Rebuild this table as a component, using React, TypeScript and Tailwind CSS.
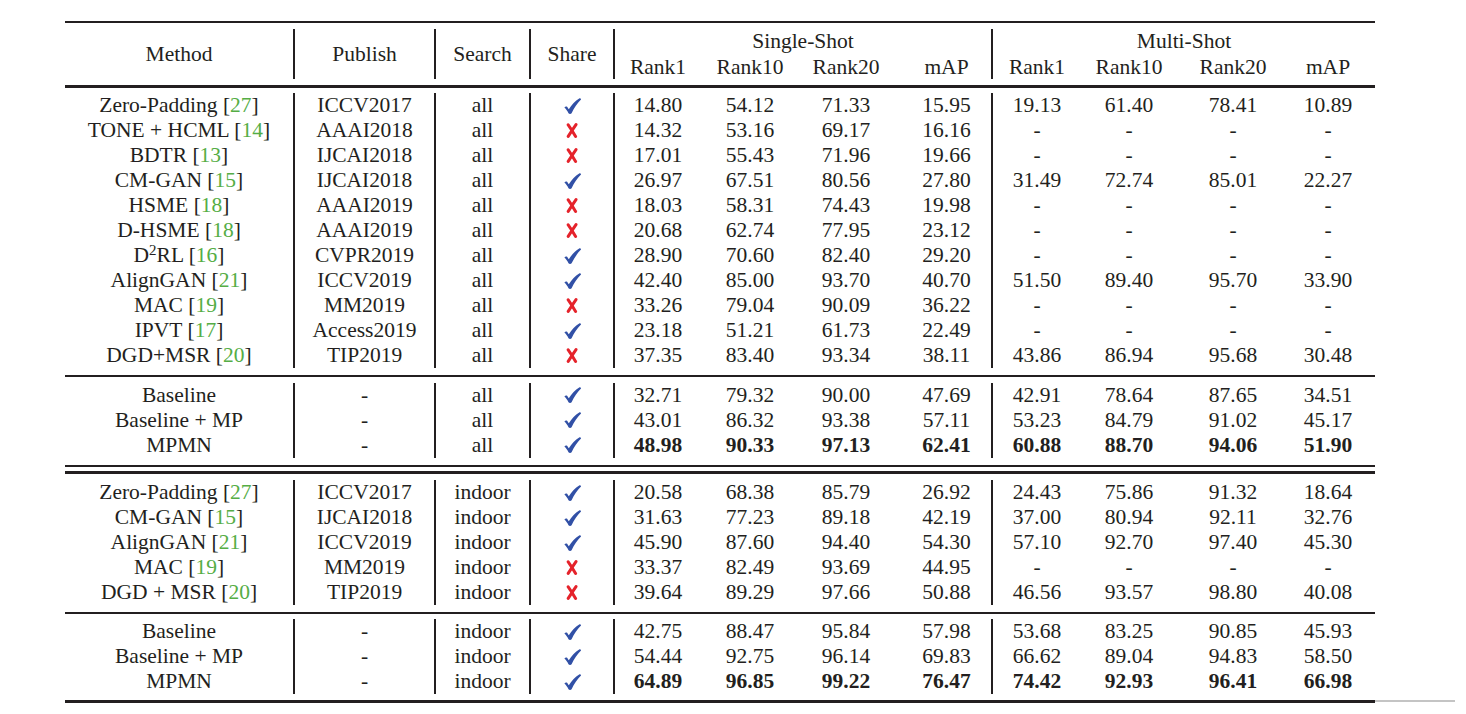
import React from "react";

const INK = "text-[#231f20]";

function Check() {
  return (
    <svg viewBox="0 0 17 16" className="inline-block w-[17px] h-[16px] align-middle" aria-hidden>
      <path
        d="M0.4 9.6 C1.4 8.2 3.1 8.2 3.9 9.9 L4.8 11.2 C7.8 6.6 11.2 2.8 15.2 0.4 C16.2 -0.1 17.4 0.8 17 1.6 C13.2 5.4 10.2 10 7.6 15.2 C7 16.2 5.2 16.3 4.5 15.2 C3.4 13.2 2.2 11.3 0.4 9.6 Z"
        fill="#3150a6"
      />
    </svg>
  );
}

function Cross() {
  return (
    <svg viewBox="0 0 12 15" className="inline-block w-[12px] h-[15px] align-middle" aria-hidden>
      <path d="M2.2 1.8 C4.5 5 7 9 9.6 13.4" stroke="#e5232b" strokeWidth="3" strokeLinecap="round" fill="none" />
      <path d="M10 1.6 C7.5 5.2 5 9 2.2 13.4" stroke="#e5232b" strokeWidth="3" strokeLinecap="round" fill="none" />
    </svg>
  );
}

function Cite({ n }: { n: string }) {
  return (
    <>
      {" "}[<span className="text-[#55ad45]">{n}</span>]
    </>
  );
}

type Row = {
  m: React.ReactNode;
  p: string;
  s: string;
  ok: boolean;
  v: string[];
  bold?: boolean;
};

const DASH = ["-", "-", "-", "-"];

const secA: Row[] = [
  { m: <>Zero-Padding<Cite n="27" /></>, p: "ICCV2017", s: "all", ok: true, v: ["14.80", "54.12", "71.33", "15.95", "19.13", "61.40", "78.41", "10.89"] },
  { m: <>TONE + HCML<Cite n="14" /></>, p: "AAAI2018", s: "all", ok: false, v: ["14.32", "53.16", "69.17", "16.16", ...DASH] },
  { m: <>BDTR<Cite n="13" /></>, p: "IJCAI2018", s: "all", ok: false, v: ["17.01", "55.43", "71.96", "19.66", ...DASH] },
  { m: <>CM-GAN<Cite n="15" /></>, p: "IJCAI2018", s: "all", ok: true, v: ["26.97", "67.51", "80.56", "27.80", "31.49", "72.74", "85.01", "22.27"] },
  { m: <>HSME<Cite n="18" /></>, p: "AAAI2019", s: "all", ok: false, v: ["18.03", "58.31", "74.43", "19.98", ...DASH] },
  { m: <>D-HSME<Cite n="18" /></>, p: "AAAI2019", s: "all", ok: false, v: ["20.68", "62.74", "77.95", "23.12", ...DASH] },
  { m: <>D<sup className="text-[15px]">2</sup>RL<Cite n="16" /></>, p: "CVPR2019", s: "all", ok: true, v: ["28.90", "70.60", "82.40", "29.20", ...DASH] },
  { m: <>AlignGAN<Cite n="21" /></>, p: "ICCV2019", s: "all", ok: true, v: ["42.40", "85.00", "93.70", "40.70", "51.50", "89.40", "95.70", "33.90"] },
  { m: <>MAC<Cite n="19" /></>, p: "MM2019", s: "all", ok: false, v: ["33.26", "79.04", "90.09", "36.22", ...DASH] },
  { m: <>IPVT<Cite n="17" /></>, p: "Access2019", s: "all", ok: true, v: ["23.18", "51.21", "61.73", "22.49", ...DASH] },
  { m: <>DGD+MSR<Cite n="20" /></>, p: "TIP2019", s: "all", ok: false, v: ["37.35", "83.40", "93.34", "38.11", "43.86", "86.94", "95.68", "30.48"] },
];

const secB: Row[] = [
  { m: "Baseline", p: "-", s: "all", ok: true, v: ["32.71", "79.32", "90.00", "47.69", "42.91", "78.64", "87.65", "34.51"] },
  { m: "Baseline + MP", p: "-", s: "all", ok: true, v: ["43.01", "86.32", "93.38", "57.11", "53.23", "84.79", "91.02", "45.17"] },
  { m: "MPMN", p: "-", s: "all", ok: true, bold: true, v: ["48.98", "90.33", "97.13", "62.41", "60.88", "88.70", "94.06", "51.90"] },
];

const secC: Row[] = [
  { m: <>Zero-Padding<Cite n="27" /></>, p: "ICCV2017", s: "indoor", ok: true, v: ["20.58", "68.38", "85.79", "26.92", "24.43", "75.86", "91.32", "18.64"] },
  { m: <>CM-GAN<Cite n="15" /></>, p: "IJCAI2018", s: "indoor", ok: true, v: ["31.63", "77.23", "89.18", "42.19", "37.00", "80.94", "92.11", "32.76"] },
  { m: <>AlignGAN<Cite n="21" /></>, p: "ICCV2019", s: "indoor", ok: true, v: ["45.90", "87.60", "94.40", "54.30", "57.10", "92.70", "97.40", "45.30"] },
  { m: <>MAC<Cite n="19" /></>, p: "MM2019", s: "indoor", ok: false, v: ["33.37", "82.49", "93.69", "44.95", ...DASH] },
  { m: <>DGD + MSR<Cite n="20" /></>, p: "TIP2019", s: "indoor", ok: false, v: ["39.64", "89.29", "97.66", "50.88", "46.56", "93.57", "98.80", "40.08"] },
];

const secD: Row[] = [
  { m: "Baseline", p: "-", s: "indoor", ok: true, v: ["42.75", "88.47", "95.84", "57.98", "53.68", "83.25", "90.85", "45.93"] },
  { m: "Baseline + MP", p: "-", s: "indoor", ok: true, v: ["54.44", "92.75", "96.14", "69.83", "66.62", "89.04", "94.83", "58.50"] },
  { m: "MPMN", p: "-", s: "indoor", ok: true, bold: true, v: ["64.89", "96.85", "99.22", "76.47", "74.42", "92.93", "96.41", "66.98"] },
];

const GRID =
  "grid grid-cols-[228px_141px_95px_84px_88px_98px_94px_98px_90px_96px_112px_86px]";

const BAR = "border-l-2 border-[#231f20]";

const valClass = [BAR, "", "", "pl-[9px]", BAR, "", "", "pr-[8px]"];

function Section({ rows, className }: { rows: Row[]; className: string }) {
  return (
    <div className={`${GRID} leading-[25px] ${className}`}>
      {rows.map((r, i) => (
        <React.Fragment key={i}>
          <div className="text-center whitespace-nowrap">{r.m}</div>
          <div className={`text-center ${BAR}`}>{r.p}</div>
          <div className={`text-center ${BAR}`}>{r.s}</div>
          <div className={`flex items-center justify-center ${BAR}`}>{r.ok ? <Check /> : <Cross />}</div>
          {r.v.map((x, j) => (
            <div key={j} className={`text-center ${valClass[j]} ${r.bold ? "font-bold" : ""}`}>
              {x}
            </div>
          ))}
        </React.Fragment>
      ))}
    </div>
  );
}

function Rule({ h }: { h: string }) {
  return <div className={`w-[1310px] bg-[#231f20] ${h}`} />;
}

export default function App() {
  return (
    <div
      className={`w-[1466px] h-[714px] bg-white pl-[65px] pt-[21px] text-[21.5px] ${INK} overflow-hidden`}
      style={{ fontFamily: '"Liberation Serif", "Times New Roman", serif' }}
    >
      <Rule h="h-[2px]" />
      <div className="pt-[8px] pb-[6px]">
        <div className={`${GRID} grid-rows-[24px_24px] leading-[24px]`}>
          <div className="row-span-2 flex items-center justify-center -mt-[2px]">Method</div>
          <div className={`row-span-2 flex items-center justify-center -mt-[2px] ${BAR}`}>Publish</div>
          <div className={`row-span-2 flex items-center justify-center -mt-[2px] ${BAR}`}>Search</div>
          <div className={`row-span-2 flex items-center justify-center -mt-[2px] ${BAR}`}>Share</div>
          <div className={`col-span-4 text-center -mt-[2px] ${BAR}`}>Single-Shot</div>
          <div className={`col-span-4 text-center -mt-[2px] ${BAR}`}>Multi-Shot</div>
          <div className={`text-center ${BAR}`}>Rank1</div>
          <div className="text-center">Rank10</div>
          <div className="text-center">Rank20</div>
          <div className="text-center pl-[9px]">mAP</div>
          <div className={`text-center ${BAR}`}>Rank1</div>
          <div className="text-center">Rank10</div>
          <div className="text-center">Rank20</div>
          <div className="text-center pr-[8px]">mAP</div>
        </div>
      </div>
      <Rule h="h-[2.5px]" />
      <Section rows={secA} className="pt-[5.5px] pb-[6.5px]" />
      <Rule h="h-[2px]" />
      <Section rows={secB} className="pt-[6px] pb-[7px]" />
      <Rule h="h-[2.5px]" />
      <div className="h-[4px]" />
      <Rule h="h-[2.5px]" />
      <Section rows={secC} className="pt-[6.5px] pb-[7px]" />
      <Rule h="h-[2px]" />
      <Section rows={secD} className="pt-[5px] pb-[5.5px]" />
      <div className="flex items-center">
        <div className="w-[1310px] h-[3px] bg-[#231f20]" />
        <div className="w-[80px] h-[1.5px] bg-[#c4c4c4]" />
      </div>
    </div>
  );
}
